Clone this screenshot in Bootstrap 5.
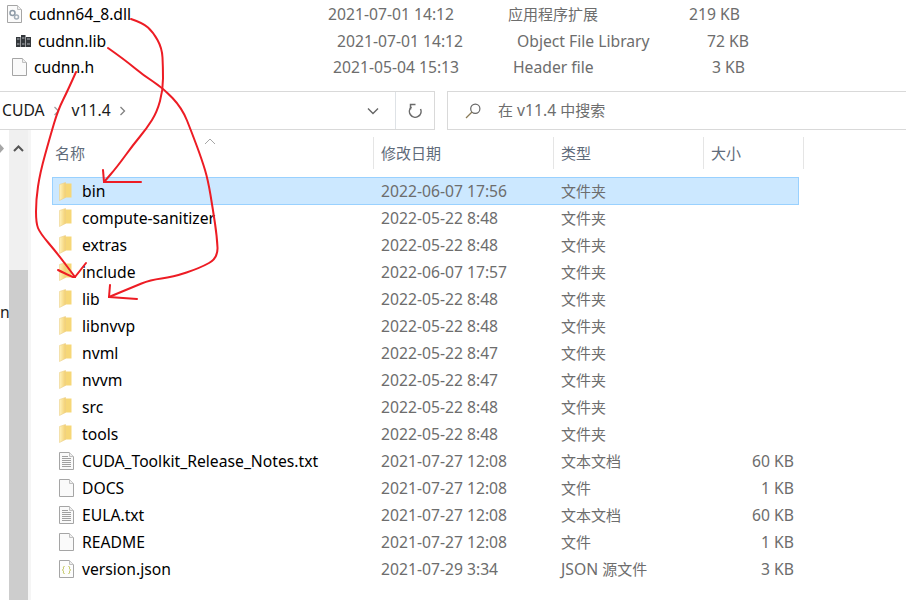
<!DOCTYPE html>
<html lang="zh-CN">
<head>
  <meta charset="UTF-8">
  <meta name="viewport" content="width=device-width, initial-scale=1.0">
  <title>v11.4</title>
  <link href="https://cdn.jsdelivr.net/npm/bootstrap@5.3.0/dist/css/bootstrap.min.css" rel="stylesheet">
  <style>
    body {
      width: 910px;
      height: 600px;
      overflow: hidden;
      position: relative;
      background: #fff;
      font-family: "Noto Sans", "Noto Sans CJK SC", sans-serif;
      font-size: 15.7px;
      line-height: 20px;
      color: #6d6d6d;
    }
    .zh { font-size: 15px; }
    .top-files { height: 91px; padding-top: 2px; }
    .top-row { height: 26px; }
    .top-a { margin-left: 7px; margin-top: -1px; margin-bottom: 1px; }
    .top-b { margin-left: 16px; }
    .top-c { margin-left: 12px; }
    .top-icon { width: 22px; }
    .top-name { width: 299px; color: #000; }
    .top-date { width: 180px; }
    .top-type { width: 171px; }
    .top-size { width: 61px; text-align: right; }
    .addr-row { height: 39px; }
    .addr-box { width: 435px; border: 1px solid #d9d9d9; border-left: 0; color: #1a1a1a; }
    .addr-path { width: 395px; padding-left: 2px; }
    .addr-path span { padding-bottom: 2px; }
    .search-box { margin-left: 12px; width: 459px; border: 1px solid #d9d9d9; border-right: 0; padding-left: 17px; }
    .search-text { padding-bottom: 2px; margin-left: 17px; }
    .main-pane { height: 471px; }
    .side-strip { width: 9px; position: relative; }
    .cut-text { position: absolute; left: 0; top: 172px; color: #222; }
    .side-arrow { position: absolute; left: 0; top: 14px; }
    .scroll-track { width: 19px; background: #f0f0f0; }
    .scroll-up { height: 140px; padding-top: 15px; }
    .scroll-thumb { flex: 1; background: #cdcdcd; }
    .pane-line { width: 3px; background: #f5f5f5; }
    .file-pane { width: 858px; position: relative; }
    .sort-mark { position: absolute; left: 173px; top: 8px; }
    .head-row { height: 47px; padding-top: 7px; }
    .head-cell { height: 32px; border-right: 1px solid #e5e5e5; padding-left: 7px; color: #5f6b7a; display: flex; align-items: center; font-size: 15px; }
    .head-name { margin-left: 17px; width: 326px; }
    .head-date { width: 180px; }
    .head-type { width: 150px; }
    .head-size { width: 100px; }
    .file-row { height: 27px; margin-left: 21px; width: 747px; }
    .file-row.is-picked { height: 28px; background: #cce8ff; border: 1px solid #99d1ff; margin-bottom: -1px; }
    .file-icon { width: 30px; padding-left: 7px; }
    .is-picked .file-icon { width: 29px; padding-left: 6px; }
    .file-name { width: 299px; color: #000; white-space: nowrap; }
    .file-date { width: 180px; }
    .file-type { width: 143px; }
    .file-size { width: 90px; text-align: right; }
    .ink-layer { position: absolute; left: 0; top: 0; pointer-events: none; }
  </style>
</head>
<body>
  <svg width="0" height="0" class="d-block">
    <defs>
      <linearGradient id="leaf" x1="0" x2="1" y1="0" y2="0">
        <stop offset="0" stop-color="#fff3bd"/>
        <stop offset="1" stop-color="#f3cf70"/>
      </linearGradient>
      <symbol id="ic-folder" viewBox="0 0 13 19">
        <path d="M6 1.500h6.500v14H6z" fill="#f6d777"/>
        <path d="M.5 2.500 6.500.5v15L.5 18.500z" fill="url(#leaf)" stroke="#ecd08a" stroke-width=".6"/>
      </symbol>
      <symbol id="ic-page" viewBox="0 0 15 18">
        <path d="M.5.500h10l4 4v13H.5z" fill="#fafafa" stroke="#a5a5a5"/>
        <path d="M10.500.500v4h4" fill="#eee" stroke="#c0c0c0"/>
      </symbol>
      <symbol id="ic-text" viewBox="0 0 15 18">
        <path d="M.5.500h10l4 4v13H.5z" fill="#fafafa" stroke="#a5a5a5"/>
        <path d="M10.500.500v4h4" fill="#eee" stroke="#c0c0c0"/>
        <path d="M3 4.500h6M3 6.500h9M3 8.500h9M3 10.500h9M3 12.500h9M3 14.500h9" stroke="#a0a0a0"/>
      </symbol>
      <symbol id="ic-json" viewBox="0 0 15 18">
        <path d="M.5.500h10l4 4v13H.5z" fill="#fdfdfd" stroke="#a5a5a5"/>
        <path d="M10.500.500v4h4" fill="#eee" stroke="#c0c0c0"/>
        <path d="M5.500 6.500c-1.500 0-1 1-1 2s-1 1.500-1 1.500 1 .5 1 1.500-.5 2 1 2M9.500 6.500c1.500 0 1 1 1 2s1 1.500 1 1.500-1 .5-1 1.500.5 2-1 2" fill="none" stroke="#b9bd45"/>
      </symbol>
      <symbol id="ic-dll" viewBox="0 0 15 18">
        <path d="M.5.500h10l4 4v13H.5z" fill="#fbfbfb" stroke="#a5a5a5"/>
        <path d="M10.500.500v4h4" fill="#eee" stroke="#c0c0c0"/>
        <circle cx="5.500" cy="8" r="2.500" fill="none" stroke="#8d9aa6" stroke-width="1.500"/>
        <circle cx="9.500" cy="12" r="2" fill="none" stroke="#a3aeb8" stroke-width="1.500"/>
      </symbol>
      <symbol id="ic-lib" viewBox="0 0 15 12">
        <path d="M0 2h4.500v10H0zM5 0h4.500v12H5zM10 2h5v10h-5z" fill="#33373b"/>
        <path d="M1 4h2.500M6 3h2.500M11 4h3M1 9h2.500M6 9h2.500M11 9h3" stroke="#aeb3b8"/>
      </symbol>
    </defs>
  </svg>

  <div class="top-files">
    <div class="top-row top-a d-flex align-items-center">
      <div class="top-icon d-flex"><svg width="15" height="18"><use href="#ic-dll"/></svg></div>
      <div class="top-name">cudnn64_8.dll</div><div class="top-date">2021-07-01 14:12</div><div class="top-type zh">应用程序扩展</div><div class="top-size">219 KB</div>
    </div>
    <div class="top-row top-b d-flex align-items-center">
      <div class="top-icon d-flex"><svg width="15" height="12"><use href="#ic-lib"/></svg></div>
      <div class="top-name">cudnn.lib</div><div class="top-date">2021-07-01 14:12</div><div class="top-type">Object File Library</div><div class="top-size">72 KB</div>
    </div>
    <div class="top-row top-c d-flex align-items-center">
      <div class="top-icon d-flex"><svg width="15" height="18"><use href="#ic-page"/></svg></div>
      <div class="top-name">cudnn.h</div><div class="top-date">2021-05-04 15:13</div><div class="top-type">Header file</div><div class="top-size">3 KB</div>
    </div>
  </div>

  <div class="addr-row d-flex">
    <div class="addr-box d-flex align-items-center">
      <div class="addr-path d-flex align-items-center">
        <span>CUDA</span>
        <svg class="mx-2" width="7" height="10"><path d="M1.500 1 5.500 5l-4 4" fill="none" stroke="#a0a0a0" stroke-width="1.300"/></svg>
        <span class="ms-1">v11.4</span>
        <svg class="ms-2" width="7" height="10"><path d="M1.500 1 5.500 5l-4 4" fill="none" stroke="#808080" stroke-width="1.300"/></svg>
        <svg class="ms-auto me-3" width="12" height="8"><path d="M1 1.500 6 6.500l5-5" fill="none" stroke="#666" stroke-width="1.400"/></svg>
      </div>
      <div class="flex-grow-1 h-100 border-start d-flex align-items-center justify-content-center">
        <svg width="15" height="15" viewBox="0 0 15 15"><path d="M12.500 6A5.800 5.800 0 1 1 3.500 4" fill="none" stroke="#6b6b6b" stroke-width="1.500"/><path d="M2.500 6.500V1.500H7.500" fill="none" stroke="#6b6b6b" stroke-width="1.500"/></svg>
      </div>
    </div>
    <div class="search-box d-flex align-items-center">
      <svg width="16" height="16" viewBox="0 0 16 16"><circle cx="10.300" cy="5.700" r="4.600" fill="none" stroke="#666" stroke-width="1.200"/><path d="M7 9 1 15" stroke="#8a7a55" stroke-width="1.300"/></svg>
      <span class="search-text"><span class="zh">在</span> v11.4 <span class="zh">中搜索</span></span>
    </div>
  </div>

  <div class="main-pane d-flex">
    <div class="side-strip">
      <span class="cut-text">n</span>
      <svg class="side-arrow" width="5" height="9"><path d="M0 0l4 4.500L0 9z" fill="#a6a6a6"/></svg>
    </div>
    <div class="scroll-track d-flex flex-column">
      <div class="scroll-up"><svg class="d-block mx-auto" width="11" height="7"><path d="M1 6 5.500 1.500 10 6" fill="none" stroke="#555" stroke-width="2"/></svg></div>
      <div class="scroll-thumb"></div>
    </div>
    <div class="pane-line"></div>
    <div class="file-pane">
      <svg class="sort-mark" width="12" height="7"><path d="M1 6 6 1l5 5" fill="none" stroke="#a6a6a6"/></svg>
      <div class="head-row d-flex">
        <div class="head-cell head-name">名称</div>
        <div class="head-cell head-date">修改日期</div>
        <div class="head-cell head-type">类型</div>
        <div class="head-cell head-size">大小</div>
      </div>
      <div id="fileList"></div>
    </div>
  </div>

  <svg id="inkLayer" class="ink-layer" width="910" height="600" fill="none" stroke="#ed1c24" stroke-width="2" stroke-linejoin="round" stroke-linecap="round"></svg>

  <script>
    const files = [
      ['ic-folder', 'bin', '2022-06-07 17:56', '文件夹', ''],
      ['ic-folder', 'compute-sanitizer', '2022-05-22 8:48', '文件夹', ''],
      ['ic-folder', 'extras', '2022-05-22 8:48', '文件夹', ''],
      ['ic-folder', 'include', '2022-06-07 17:57', '文件夹', ''],
      ['ic-folder', 'lib', '2022-05-22 8:48', '文件夹', ''],
      ['ic-folder', 'libnvvp', '2022-05-22 8:48', '文件夹', ''],
      ['ic-folder', 'nvml', '2022-05-22 8:47', '文件夹', ''],
      ['ic-folder', 'nvvm', '2022-05-22 8:47', '文件夹', ''],
      ['ic-folder', 'src', '2022-05-22 8:48', '文件夹', ''],
      ['ic-folder', 'tools', '2022-05-22 8:48', '文件夹', ''],
      ['ic-text', 'CUDA_Toolkit_Release_Notes.txt', '2021-07-27 12:08', '文本文档', '60 KB'],
      ['ic-page', 'DOCS', '2021-07-27 12:08', '文件', '1 KB'],
      ['ic-text', 'EULA.txt', '2021-07-27 12:08', '文本文档', '60 KB'],
      ['ic-page', 'README', '2021-07-27 12:08', '文件', '1 KB'],
      ['ic-json', 'version.json', '2021-07-29 3:34', 'JSON <span class="zh">源文件</span>', '3 KB']
    ];

    const list = document.getElementById('fileList');
    files.forEach((f, i) => {
      const isFolder = f[0] === 'ic-folder';
      const size = isFolder ? 'width="13" height="19"' : 'width="15" height="18"';
      const typeClass = f[3].startsWith('JSON') ? '' : 'zh';
      const row = `<div class="file-row d-flex align-items-center ${i === 0 ? 'is-picked' : ''}">
        <div class="file-icon d-flex"><svg ${size}><use href="#${f[0]}"/></svg></div>
        <div class="file-name">${f[1]}</div>
        <div class="file-date">${f[2]}</div>
        <div class="file-type ${typeClass}">${f[3]}</div>
        <div class="file-size">${f[4]}</div>
      </div>`;
      list.innerHTML += row;
    });

    // hand drawn arrows, smoothed through midpoints
    const strokes = [
      [[131,19],[143,23],[153,32],[162,48],[163,67],[163,90],[157,112],[147,128],[133,145],[117,167],[104,182]],
      [[103,170],[104,182]],
      [[104,182],[141,182]],
      [[108,48],[125,60],[143,75],[163,88],[182,108],[192,133],[202,160],[208,180],[213,210],[217,237],[218,258],[200,268],[173,277],[150,280],[133,287],[109,297]],
      [[110,285],[109,297]],
      [[109,297],[137,299]],
      [[76,72],[68,90],[58,110],[50,137],[40,173],[36,200],[36,223],[40,233],[57,253],[75,277]],
      [[58,270],[72,277],[75,277]],
      [[75,277],[86,263]]
    ];
    document.getElementById('inkLayer').innerHTML = strokes.map(pts => {
      let d = `M${pts[0]}`;
      for (let i = 1; i < pts.length - 1; i++) {
        const mx = (pts[i][0] + pts[i + 1][0]) / 2;
        const my = (pts[i][1] + pts[i + 1][1]) / 2;
        d += `Q${pts[i]} ${mx},${my}`;
      }
      d += `L${pts[pts.length - 1]}`;
      return `<path d="${d}"/>`;
    }).join('');
  </script>
  <script src="https://cdn.jsdelivr.net/npm/bootstrap@5.3.0/dist/js/bootstrap.bundle.min.js"></script>
</body>
</html>
